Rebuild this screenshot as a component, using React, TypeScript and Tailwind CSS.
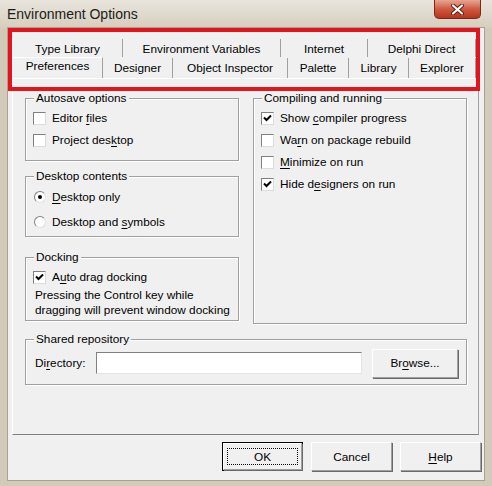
import type { ReactNode } from "react";

const BACK_TABS = [
  { label: "Type Library", w: "w-[111px]" },
  { label: "Environment Variables", w: "w-[158px]" },
  { label: "Internet", w: "w-[87px]" },
  { label: "Delphi Direct", w: "w-[108px]" },
];

const FRONT_TABS = [
  { label: "Preferences", w: "w-[91px]", active: true },
  { label: "Designer", w: "w-[70px]" },
  { label: "Object Inspector", w: "w-[115px]" },
  { label: "Palette", w: "w-[61px]" },
  { label: "Library", w: "w-[60px]" },
  { label: "Explorer", w: "w-[67px]" },
];

function Acc({ children }: { children: ReactNode }) {
  return <span className="underline underline-offset-[2px]">{children}</span>;
}

function Check({ checked }: { checked?: boolean }) {
  return (
    <span className="w-[13px] h-[13px] shrink-0 flex items-center justify-center bg-white border border-t-[#808080] border-l-[#808080] border-b-[#dcdcdc] border-r-[#dcdcdc]">
      {checked && (
        <svg width="9" height="9" viewBox="0 0 9 9">
          <path d="M1 3.5 L3.5 6 L8 1.5" fill="none" stroke="#000" strokeWidth="2" />
        </svg>
      )}
    </span>
  );
}

function Radio({ checked }: { checked?: boolean }) {
  return (
    <span className="w-[12px] h-[12px] shrink-0 rounded-full flex items-center justify-center bg-white border border-t-[#808080] border-l-[#808080] border-b-[#e0e0e0] border-r-[#e0e0e0]">
      {checked && <span className="w-[4px] h-[4px] rounded-full bg-black" />}
    </span>
  );
}

function GroupBox({ title, className, children }: { title: string; className: string; children?: ReactNode }) {
  return (
    <div className={`relative border border-[#a0a0a0] shadow-[inset_1px_1px_0_#fff,1px_1px_0_#fff] ${className}`}>
      <span className="absolute -top-[8px] left-[8px] px-[2px] bg-[#f0f0f0] leading-[14px]">{title}</span>
      {children}
    </div>
  );
}

function Row({ children, h = "h-[22px]" }: { children: ReactNode; h?: string }) {
  return <div className={`${h} flex items-center gap-[6px]`}>{children}</div>;
}

function Button({ children, focused, w = "w-[81px]" }: { children: ReactNode; focused?: boolean; w?: string }) {
  return (
    <div className={`${w} h-[29px] bg-[#f0f0f0] ${focused ? "border border-black" : ""}`}>
      <div className="h-full flex items-center justify-center border border-t-white border-l-white border-r-[#a0a0a0] border-b-[#a0a0a0] shadow-[1px_1px_0_#696969]">
        <div className={`px-[3px] py-[2px] w-full mx-[3px] h-[calc(100%-8px)] flex items-center justify-center ${focused ? "border border-dotted border-black" : ""}`}>
          {children}
        </div>
      </div>
    </div>
  );
}

export default function App() {
  return (
    <div className="w-[492px] h-[486px] flex flex-col bg-[#d3cbb9] text-[11.8px] leading-[14px] text-black font-['Liberation_Sans',Arial,sans-serif] overflow-hidden">
      {/* title bar */}
      <div className="relative h-[28px] shrink-0 flex items-center pl-[7px] bg-gradient-to-b from-[#e9e5dd] to-[#d6cebd]">
        <span className="text-[14px] text-[#1b1b1b]">Environment Options</span>
        <div className="absolute top-0 right-[11px] w-[47px] h-[19px] rounded-b-[5px] border border-t-0 border-[#7a2a1c] bg-gradient-to-b from-[#e8a593] via-[#cd5a40] to-[#b8321c] flex items-center justify-center">
          <svg width="13" height="11" viewBox="0 0 13 11">
            <path d="M2 1.5 L11 9.5 M11 1.5 L2 9.5" stroke="#5a1a10" strokeWidth="4" strokeLinecap="round" />
            <path d="M2 1.5 L11 9.5 M11 1.5 L2 9.5" stroke="#fff" strokeWidth="2.2" strokeLinecap="round" />
          </svg>
        </div>
      </div>

      {/* client area */}
      <div className="relative mx-[8px] mb-[6px] flex-1 flex flex-col bg-[#f0f0f0] shadow-[0_0_0_1px_#aaa190]">
        {/* tab strip */}
        <div className="ml-[4px] mt-[8px] w-[464px]">
          <div className="h-[21px] flex items-end">
            {BACK_TABS.map((t, i) => (
              <div
                key={t.label}
                className={`${t.w} h-[18px] flex items-end justify-center pb-[1px] border-r border-r-[#a0a0a0] ${i === 0 ? "border-l border-l-white" : ""}`}
              >
                {t.label}
              </div>
            ))}
          </div>
          <div className="h-[21px] flex items-end">
            {FRONT_TABS.map((t, i) => (
              <div
                key={t.label}
                className={`${t.w} flex items-end justify-center border-r border-r-[#a0a0a0] ${
                  t.active ? "h-[21px] pb-[5px] border-t border-t-white" : "h-[20px] pb-[3px]"
                } ${i === 0 ? "border-l border-l-white" : ""}`}
              >
                {t.label}
              </div>
            ))}
          </div>
        </div>

        {/* tab page */}
        <div className="ml-[4px] w-[467px] h-[357px] border border-t-white border-l-white border-r-[#a0a0a0] border-b-[#808080] pl-[12px] pt-[19px]">
          <div className="flex gap-[14px] items-start">
            <div className="w-[214px] flex flex-col">
              <GroupBox title="Autosave options" className="h-[63px] pl-[7px] pt-[8px]">
                <Row>
                  <Check />
                  <span>
                    Editor <Acc>f</Acc>iles
                  </span>
                </Row>
                <Row>
                  <Check />
                  <span>
                    Project des<Acc>k</Acc>top
                  </span>
                </Row>
              </GroupBox>
              <GroupBox title="Desktop contents" className="mt-[15px] h-[61px] pl-[8px] pt-[8px]">
                <Row h="h-[24px]">
                  <Radio checked />
                  <span>
                    <Acc>D</Acc>esktop only
                  </span>
                </Row>
                <div className="h-[1px]" />
                <Row h="h-[24px]">
                  <Radio />
                  <span>
                    Desktop and <Acc>s</Acc>ymbols
                  </span>
                </Row>
              </GroupBox>
              <GroupBox title="Docking" className="mt-[20px] h-[64px] pl-[7px] pt-[8px]">
                <Row>
                  <Check checked />
                  <span>
                    A<Acc>u</Acc>to drag docking
                  </span>
                </Row>
                <p className="pl-[2px] leading-[15px]">
                  Pressing the Control key while
                  <br />
                  dragging will prevent window docking
                </p>
              </GroupBox>
            </div>
            <GroupBox title="Compiling and running" className="w-[214px] h-[226px] pl-[7px] pt-[8px]">
              <Row>
                <Check checked />
                <span>
                  Show <Acc>c</Acc>ompiler progress
                </span>
              </Row>
              <Row>
                <Check />
                <span>
                  Wa<Acc>r</Acc>n on package rebuild
                </span>
              </Row>
              <Row>
                <Check />
                <span>
                  <Acc>M</Acc>inimize on run
                </span>
              </Row>
              <Row>
                <Check checked />
                <span>
                  Hide d<Acc>e</Acc>signers on run
                </span>
              </Row>
            </GroupBox>
          </div>

          <GroupBox title="Shared repository" className="mt-[15px] w-[442px] h-[46px] flex items-center pl-[9px] pr-[7px] pt-[2px]">
            <span className="w-[61px]">
              Di<Acc>r</Acc>ectory:
            </span>
            <div className="w-[266px] h-[22px] bg-white border border-t-[#808080] border-l-[#808080] border-b-[#e3e3e3] border-r-[#e3e3e3]" />
            <div className="ml-[10px]">
              <Button w="w-[86px]">
                <span>
                  Br<Acc>o</Acc>wse...
                </span>
              </Button>
            </div>
          </GroupBox>
        </div>

        {/* dialog buttons */}
        <div className="mt-[7px] flex justify-end gap-[8px] pr-[3px]">
          <Button focused>OK</Button>
          <Button>Cancel</Button>
          <Button>
            <span>
              <Acc>H</Acc>elp
            </span>
          </Button>
        </div>

        {/* red annotation frame */}
        <div className="absolute left-0 top-0 w-[472px] h-[63px] border-[4px] border-[#e3141b] pointer-events-none" />
      </div>
    </div>
  );
}
